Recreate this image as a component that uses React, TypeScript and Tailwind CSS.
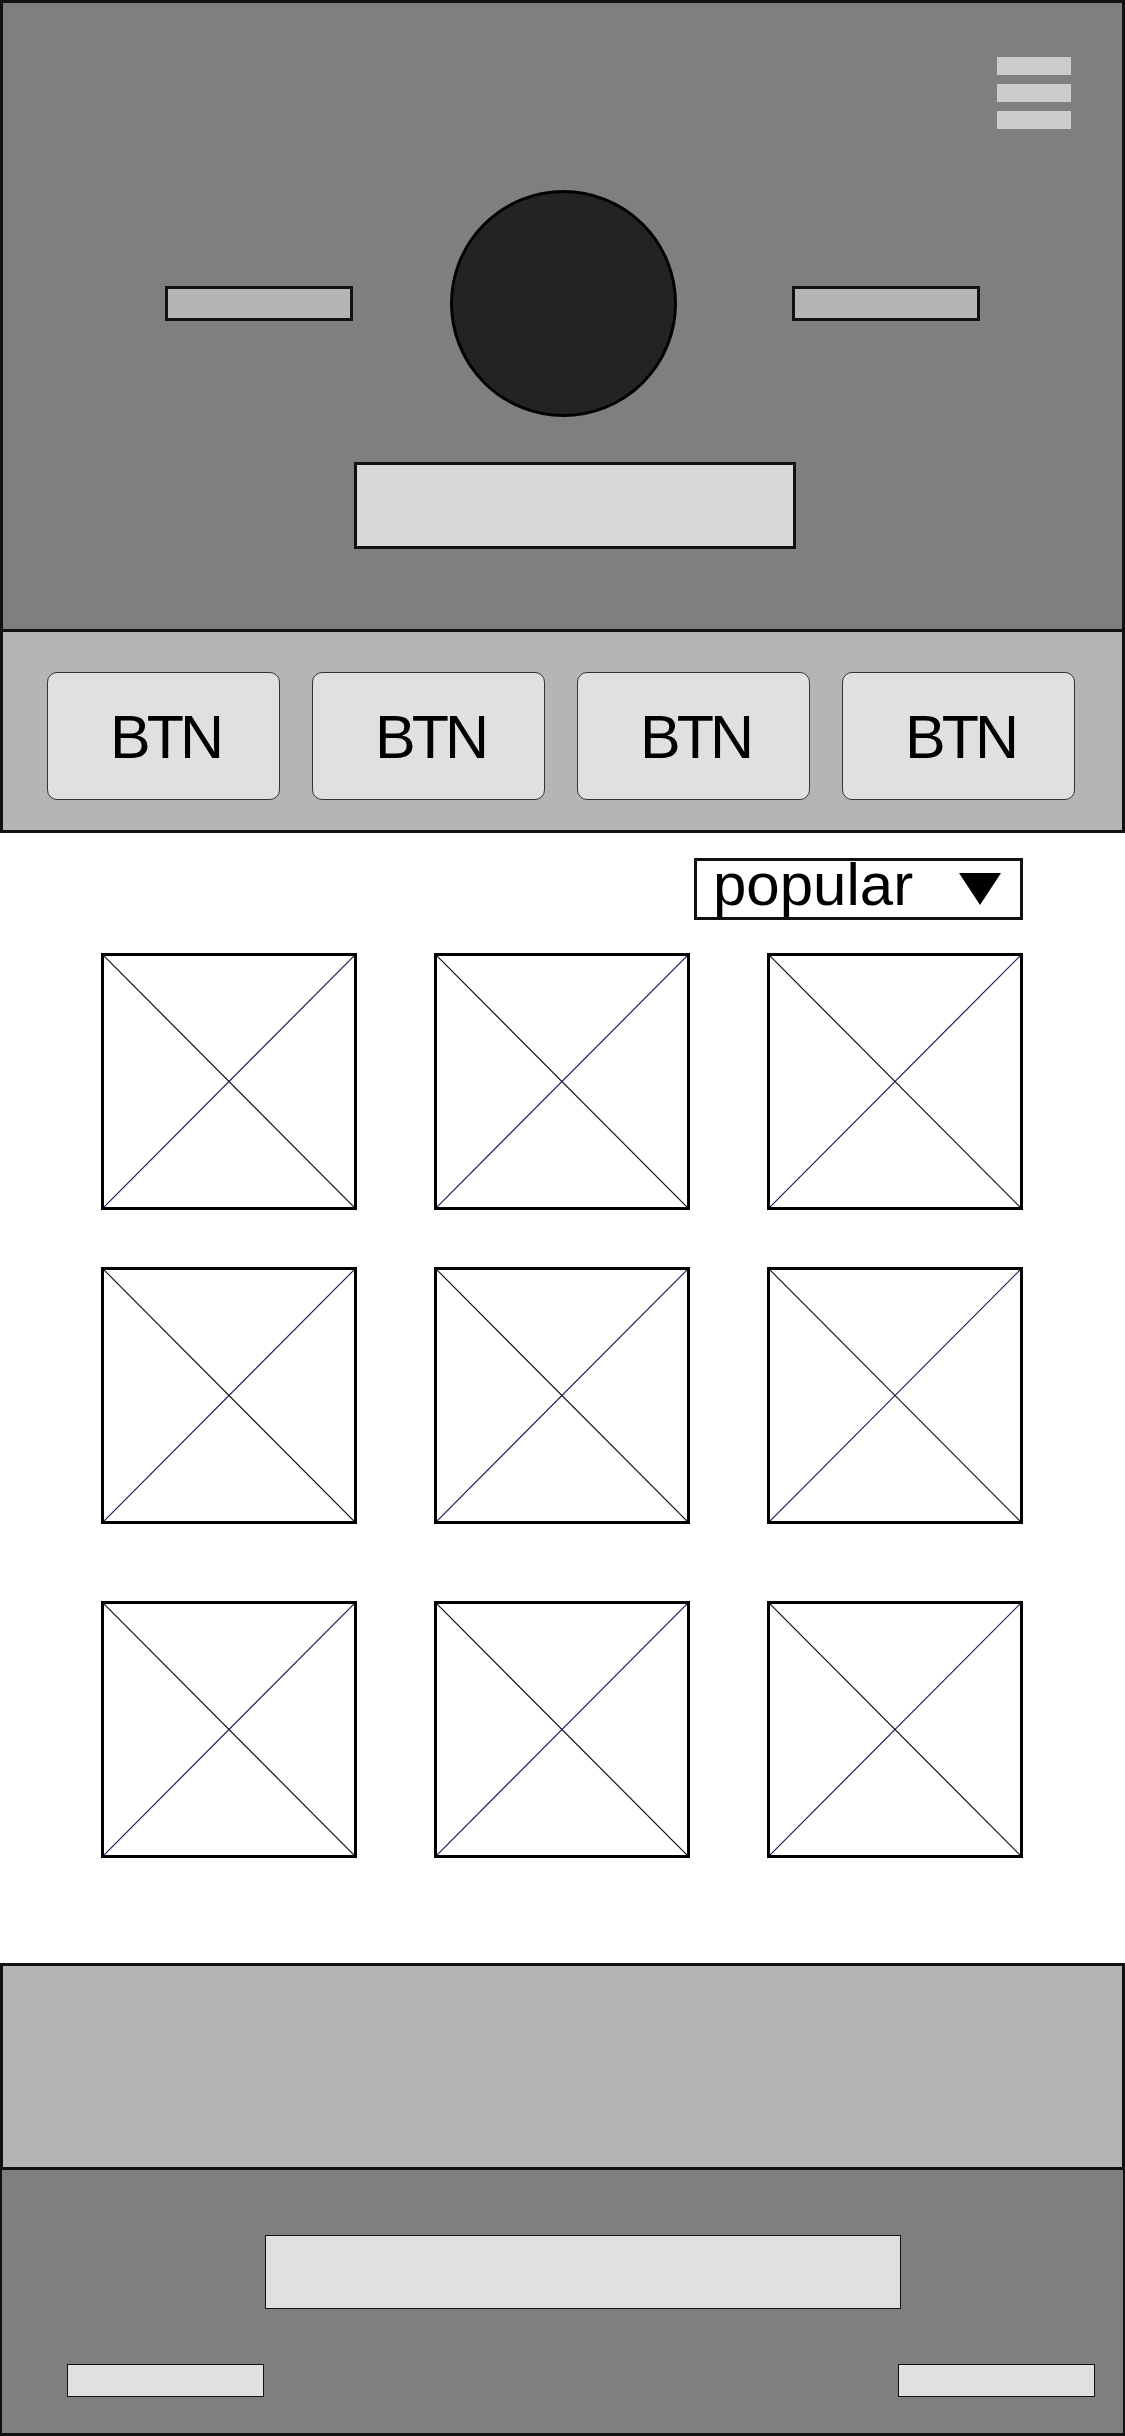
const font = { fontFamily: '"Liberation Sans", Arial, sans-serif' };

const Placeholder = () => (
  <div className="w-[256px] h-[257px] border-[3px] border-black bg-white">
    <svg className="w-full h-full block" viewBox="0 0 100 100" preserveAspectRatio="none">
      <line x1="0" y1="0" x2="100" y2="100" stroke="#111" strokeWidth="1.2" vectorEffect="non-scaling-stroke" />
      <line x1="100" y1="0" x2="0" y2="100" stroke="#1c1c5a" strokeWidth="1.2" vectorEffect="non-scaling-stroke" />
    </svg>
  </div>
);

const Row = ({ className = "" }: { className?: string }) => (
  <div className={`flex gap-[77px] pl-[101px] ${className}`}>
    <Placeholder />
    <Placeholder />
    <Placeholder />
  </div>
);

const App = () => (
  <div className="w-[1125px] h-[2436px] bg-white flex flex-col overflow-hidden" style={font}>
    {/* header */}
    <header className="h-[632px] shrink-0 border-[3px] border-[#111] bg-[#7f7f7f] flex flex-col">
      <div className="flex justify-end pr-[51px] pt-[54px]">
        <div className="flex flex-col gap-[9px]">
          <span className="block w-[74px] h-[18px] bg-[#cccccc]" />
          <span className="block w-[74px] h-[18px] bg-[#cccccc]" />
          <span className="block w-[74px] h-[18px] bg-[#cccccc]" />
        </div>
      </div>
      <div className="flex items-center mt-[61px]">
        <div className="ml-[162px] w-[188px] h-[35px] border-[3px] border-[#111] bg-[#b5b5b5]" />
        <div className="ml-[97px] w-[227px] h-[227px] rounded-full border-[3px] border-black bg-[#232323]" />
        <div className="ml-[115px] w-[188px] h-[35px] border-[3px] border-[#111] bg-[#b5b5b5]" />
      </div>
      <div className="ml-[351px] mt-[45px] w-[442px] h-[87px] border-[3px] border-[#111] bg-[#d8d8d8]" />
    </header>

    {/* nav buttons */}
    <nav className="h-[201px] shrink-0 border-x-[3px] border-b-[3px] border-[#111] bg-[#b5b5b5] flex items-start gap-[32px] pl-[44px] pt-[40px]">
      {["BTN", "BTN", "BTN", "BTN"].map((label, i) => (
        <div
          key={i}
          className="w-[233px] h-[128px] rounded-[10px] border border-[#333] bg-[#e0e0e0] flex items-center justify-center pl-[3px] pt-[2px]"
        >
          <span className="text-[61px] leading-none tracking-[-4px] text-black">{label}</span>
        </div>
      ))}
    </nav>

    {/* content */}
    <main className="flex-1 flex flex-col">
      <div className="flex justify-end pr-[102px] pt-[25px]">
        <div className="w-[329px] h-[62px] border-[3px] border-[#111] bg-white flex items-start justify-between pl-[16px] pr-[19px]">
          <span className="text-[60px] leading-[60px] -mt-[6px] text-black">popular</span>
          <svg width="42" height="32" viewBox="0 0 42 32" className="mt-[12px]">
            <polygon points="0,0 42,0 21,32" fill="#000" />
          </svg>
        </div>
      </div>
      <Row className="mt-[33px]" />
      <Row className="mt-[57px]" />
      <Row className="mt-[77px]" />
    </main>

    {/* footer */}
    <section className="h-[207px] shrink-0 border-[3px] border-[#111] bg-[#b5b5b5]" />
    <footer className="h-[266px] shrink-0 border-x-2 border-b-[3px] border-[#111] bg-[#7f7f7f] flex flex-col">
      <div className="ml-[263px] mt-[65px] w-[636px] h-[74px] border border-[#111] bg-[#e0e0e0]" />
      <div className="flex justify-between pl-[65px] pr-[28px] mt-[55px]">
        <div className="w-[197px] h-[33px] border border-[#111] bg-[#e0e0e0]" />
        <div className="w-[197px] h-[33px] border border-[#111] bg-[#e0e0e0]" />
      </div>
    </footer>
  </div>
);

export default App;
